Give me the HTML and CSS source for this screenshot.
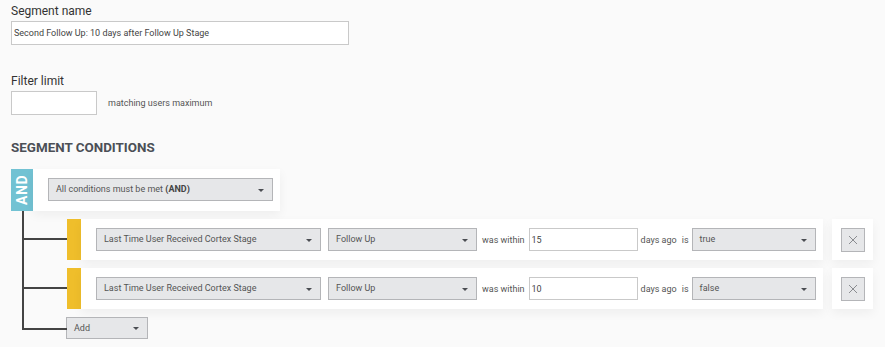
FILE: index.html
```html
<!DOCTYPE html>
<html lang="en">
<head>
  <meta charset="UTF-8" />
  <meta name="viewport" content="width=device-width, initial-scale=1.0" />
  <title>Segment</title>
  <link rel="stylesheet" href="styles.css">
</head>
<body>
  <div class="segment-form">
    <label class="field-label" for="segmentName">Segment name</label>
    <input type="text" id="segmentName" class="text-input name-input" value="Second Follow Up: 10 days after Follow Up Stage" />

    <label class="field-label limit-label" for="filterLimit">Filter limit</label>
    <div class="limit-row">
      <input type="text" id="filterLimit" class="text-input limit-input" />
      <span class="hint">matching users maximum</span>
    </div>

    <h2 class="section-title">SEGMENT CONDITIONS</h2>

    <div class="group">
      <div class="group-bar"><span>AND</span></div>
      <div class="group-panel">
        <div class="select group-select">All conditions must be met <b>(AND)</b></div>
      </div>
    </div>

    <div class="tree">
      <div class="branch">
        <div class="condition">
          <div class="condition-bar"></div>
          <div class="condition-panel">
            <div class="select attr-select">Last Time User Received Cortex Stage</div>
            <div class="select value-select">Follow Up</div>
            <span class="word within">was within</span>
            <input type="text" class="text-input days-input" value="15" />
            <span class="word days">days ago</span>
            <span class="word is">is</span>
            <div class="select bool-select">true</div>
          </div>
          <div class="remove-card">
            <button class="remove-btn" aria-label="Remove">
              <svg width="10" height="10" viewBox="0 0 10 10"><path d="M1 1L9 9M9 1L1 9" stroke="#8a8c90" stroke-width="1"/></svg>
            </button>
          </div>
        </div>
      </div>
      <div class="branch">
        <div class="condition">
          <div class="condition-bar"></div>
          <div class="condition-panel">
            <div class="select attr-select">Last Time User Received Cortex Stage</div>
            <div class="select value-select">Follow Up</div>
            <span class="word within">was within</span>
            <input type="text" class="text-input days-input" value="10" />
            <span class="word days">days ago</span>
            <span class="word is">is</span>
            <div class="select bool-select">false</div>
          </div>
          <div class="remove-card">
            <button class="remove-btn" aria-label="Remove">
              <svg width="10" height="10" viewBox="0 0 10 10"><path d="M1 1L9 9M9 1L1 9" stroke="#8a8c90" stroke-width="1"/></svg>
            </button>
          </div>
        </div>
      </div>
      <div class="branch branch-last">
        <div class="select add-select">Add</div>
      </div>
    </div>
  </div>
</body>
</html>
```

FILE: styles.css
```css
body {
  margin: 0;
  background: #fafafa;
  font-family: Roboto, 'Liberation Sans', sans-serif;
  color: #444;
}
.segment-form {
  padding: 3px 11px 0 11px;
}
.field-label {
  display: block;
  font-size: 12px;
  line-height: 16px;
  color: #333;
  margin-bottom: 2px;
}
.limit-label {
  margin-top: 28px;
}
.text-input {
  box-sizing: border-box;
  height: 24px;
  border: 1px solid #c9c9c9;
  background: #fff;
  font-family: inherit;
  font-size: 9px;
  color: #444;
  padding: 0 2px;
  margin: 0;
  outline: none;
}
.name-input {
  width: 338px;
}
.limit-row {
  display: flex;
  align-items: center;
}
.limit-input {
  width: 86px;
}
.hint {
  font-size: 9px;
  color: #555;
  margin-left: 11px;
}
.section-title {
  font-size: 13.4px;
  font-weight: bold;
  color: #4b4f56;
  margin: 25px 0 13px;
  line-height: 16px;
}
.group {
  display: flex;
  height: 42px;
}
.group-bar {
  width: 22px;
  background: #72c2d3;
  display: flex;
  align-items: center;
  justify-content: center;
}
.group-bar span {
  writing-mode: vertical-rl;
  transform: rotate(180deg);
  color: #fff;
  font-weight: bold;
  font-size: 14px;
  letter-spacing: 0.5px;
}
.group-panel {
  background: #fff;
  padding: 9px 7px 0 15px;
  box-shadow: 0 4px 10px rgba(0, 0, 0, 0.05);
}
.select {
  box-sizing: border-box;
  position: relative;
  flex-shrink: 0;
  height: 23px;
  line-height: 21px;
  border: 1px solid #b4b5b8;
  background: #e6e7e9;
  font-size: 9px;
  color: #555;
  padding: 0 20px 0 7px;
  white-space: nowrap;
}
.select::after {
  content: "";
  position: absolute;
  right: 8px;
  top: 10px;
  border-left: 3px solid transparent;
  border-right: 3px solid transparent;
  border-top: 3px solid #4a4d52;
}
.select b {
  color: #444;
}
.group-select {
  width: 225px;
}
.tree {
  margin-left: 11px;
}
.branch {
  position: relative;
  padding: 8px 0 0 45px;
}
.branch::before {
  content: "";
  position: absolute;
  left: 0;
  top: 0;
  bottom: 0;
  border-left: 2px solid #444;
}
.branch::after {
  content: "";
  position: absolute;
  left: 0;
  width: 45px;
  top: 27px;
  border-top: 2px solid #444;
}
.branch-last::before {
  bottom: auto;
  height: 21px;
}
.branch-last::after {
  top: 19px;
}
.condition {
  display: flex;
  height: 41px;
}
.condition-bar {
  width: 14px;
  background: #efbe2b;
}
.condition-panel {
  display: flex;
  align-items: center;
  background: #fff;
  padding: 0 7px 0 15px;
  width: 720px;
  box-shadow: 0 4px 10px rgba(0, 0, 0, 0.05);
}
.attr-select {
  width: 225px;
}
.value-select {
  width: 149px;
  margin-left: 7px;
}
.word {
  flex-shrink: 0;
  white-space: nowrap;
  font-size: 9px;
  color: #555;
}
.within {
  margin: 0 4px 0 5px;
}
.days {
  margin: 0 0 0 3px;
}
.is {
  margin: 0 3px 0 5px;
}
.days-input {
  flex-shrink: 0;
  width: 109px;
  height: 23px;
}
.bool-select {
  flex: 1;
}
.remove-card {
  margin-left: 9px;
  width: 41px;
  background: #fff;
  display: flex;
  align-items: center;
  justify-content: center;
  box-shadow: 0 4px 10px rgba(0, 0, 0, 0.05);
}
.remove-btn {
  width: 24px;
  height: 24px;
  padding: 0;
  border: 1px solid #b4b5b8;
  background: #e6e7e9;
  display: flex;
  align-items: center;
  justify-content: center;
}
.add-select {
  width: 82px;
  margin-left: -1px;
  height: 22px;
  line-height: 20px;
}
.add-select::after {
  top: 9px;
}
```
